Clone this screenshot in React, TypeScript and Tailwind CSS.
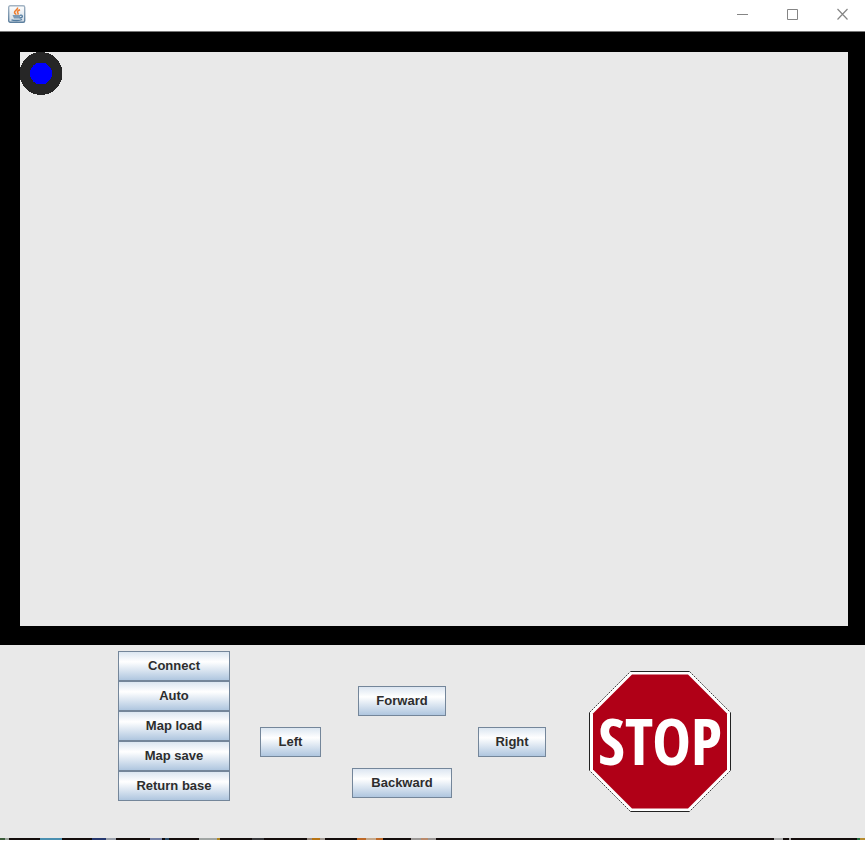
import React from "react";

function ControlButton({ children, className = "" }: { children: React.ReactNode; className?: string }) {
  return (
    <button
      type="button"
      className={`h-[30px] border border-[#74869a] bg-linear-to-b from-[#dce6f1] via-white via-35% to-[#afc6df] text-center text-[13px] leading-4 font-bold text-[#2d2d2d] ${className}`}
    >
      {children}
    </button>
  );
}

function JavaIcon() {
  return (
    <svg width="18" height="18" viewBox="0 0 18 18" aria-hidden="true">
      <defs>
        <linearGradient id="java-bg" x1="0" y1="0" x2="0" y2="1">
          <stop offset="0" stopColor="#a3b4c4" />
          <stop offset="1" stopColor="#5c7f9e" />
        </linearGradient>
        <linearGradient id="java-fill" x1="0" y1="0" x2="0" y2="1">
          <stop offset="0" stopColor="#ffffff" />
          <stop offset="1" stopColor="#cfdae4" />
        </linearGradient>
      </defs>
      <rect x="0.7" y="0.7" width="16" height="16.600" rx="1.500" fill="url(#java-fill)" stroke="url(#java-bg)" strokeWidth="1.400" />
      <path d="M9.500 2.500c1 2-3.500 3-3 5 .2 1 1.500 1.300 1.500 2.300M12 4.800c-2.500 1-3.200 2-2.200 3 .8 1-.2 1.800-.2 1.800" fill="none" stroke="#ee7d2e" strokeWidth="1.500" />
      <path d="M4.500 10h7.500v3.500h-6z" fill="#7c9ab5" />
      <path d="M12 10.300c3.200-1 3.200 2.500-.3 2.700M3.500 14.800c2.500 1 8 1 10.500-.3" fill="none" stroke="#527b9f" strokeWidth="1.300" />
    </svg>
  );
}

function TitleBar() {
  return (
    <header className="flex h-[31px] items-start justify-between bg-white pt-[5px] pr-[17px] pl-2">
      <JavaIcon />
      <div className="flex gap-[39px] pt-[3px] text-[#858585]">
        <button type="button" aria-label="Minimize">
          <svg width="11" height="12" viewBox="0 0 11 12" className="block"><path d="M0 6.500h11" stroke="currentColor" fill="none" /></svg>
        </button>
        <button type="button" aria-label="Maximize">
          <svg width="11" height="12" viewBox="0 0 11 12" className="block"><path d="M.5 1.500h10v10H.5z" stroke="currentColor" fill="none" /></svg>
        </button>
        <button type="button" aria-label="Close">
          <svg width="11" height="12" viewBox="0 0 11 12" className="block"><path d="M.5 1l10 10.500M10.500 1l-10 10.500" stroke="currentColor" strokeWidth="1.200" fill="none" /></svg>
        </button>
      </div>
    </header>
  );
}

function StopButton() {
  return (
    <button type="button" aria-label="Stop" className="ml-[43px] block">
      <svg width="142" height="141" viewBox="0 0 142 141" className="block">
        <path d="M41.500 .5h59l41 41v58l-41 41h-59l-41-41v-58z" fill="#fff" />
        <path d="M41.500 .5h59M141.500 41.500v58M100.500 140.500h-59M.5 99.500v-58" fill="none" stroke="#222" />
        <path d="M100.500 .5l41 41M141.500 99.500l-41 41M41.500 140.500l-41-41M.5 41.500l41-41" fill="none" stroke="#444" strokeDasharray="2 1" />
        <path d="M43 3.500h56l39 39v56l-39 39H43l-39-39v-56z" fill="#b00017" />
        <text x="71" y="94" textAnchor="middle" fill="#fff" fontSize="65" fontWeight="700" fontFamily="'Open Sans Condensed', 'Liberation Sans Narrow', sans-serif">STOP</text>
      </svg>
    </button>
  );
}

const taskbarMarks: [number, number, string][] = [
  [0, 5, "#3b5c3a"], [5, 4, "#9ba39b"],
  [40, 22, "#4a8fb0"], [92, 14, "#26386e"], [106, 10, "#9ba1ac"],
  [150, 12, "#7480a5"], [165, 4, "#2b4a66"], [199, 18, "#a0a5a3"],
  [217, 3, "#b08620"], [252, 12, "#3a3a3d"], [307, 5, "#998b80"],
  [312, 8, "#b87412"], [320, 5, "#a39b94"], [357, 26, "#bd6928"],
  [366, 10, "#c5a98c"], [411, 25, "#9c9896"], [421, 7, "#ba8a6b"],
  [774, 9, "#aaaaaa"], [789, 2, "#aaaaaa"], [857, 3, "#287044"], [860, 5, "#b58c30"],
];

export default function App() {
  return (
    <div className="min-h-screen bg-white pr-px pb-px font-['Liberation_Sans',Arial,sans-serif]">
      <div className="flex min-h-[calc(100vh-1px)] flex-col">
        <TitleBar />
        <main className="flex flex-1 flex-col border-t border-[#777] bg-black pt-5 pr-[17px] pb-[19px] pl-5">
          <div className="flex-1 bg-[#e9e9e9]">
            <svg width="43" height="43" viewBox="0 0 43 43" className="block" role="img" aria-label="Robot position" shapeRendering="crispEdges">
              <circle cx="21" cy="21.500" r="21.500" fill="#262626" />
              <circle cx="21" cy="21.500" r="11" fill="#00f" />
            </svg>
          </div>
        </main>
        <footer className="flex items-center justify-center bg-[#e9e9e9] py-[26px] pr-4">
          <div className="-my-5 flex w-28 flex-col self-start">
            <ControlButton>Connect</ControlButton>
            <ControlButton>Auto</ControlButton>
            <ControlButton>Map load</ControlButton>
            <ControlButton>Map save</ControlButton>
            <ControlButton>Return base</ControlButton>
          </div>
          <div className="ml-[30px] flex items-center">
            <ControlButton className="w-[61px]">Left</ControlButton>
            <div className="mr-[26px] ml-[31px] flex flex-col items-center gap-[52px]">
              <ControlButton className="w-[88px]">Forward</ControlButton>
              <ControlButton className="w-[100px]">Backward</ControlButton>
            </div>
            <ControlButton className="w-[68px]">Right</ControlButton>
          </div>
          <StopButton />
        </footer>
        <svg width="100%" height="2" className="block bg-[#140d0c]" aria-hidden="true">
          {taskbarMarks.map(([x, width, fill]) => (
            <rect key={x} x={x} y="0" width={width} height="2" fill={fill} />
          ))}
        </svg>
      </div>
    </div>
  );
}
